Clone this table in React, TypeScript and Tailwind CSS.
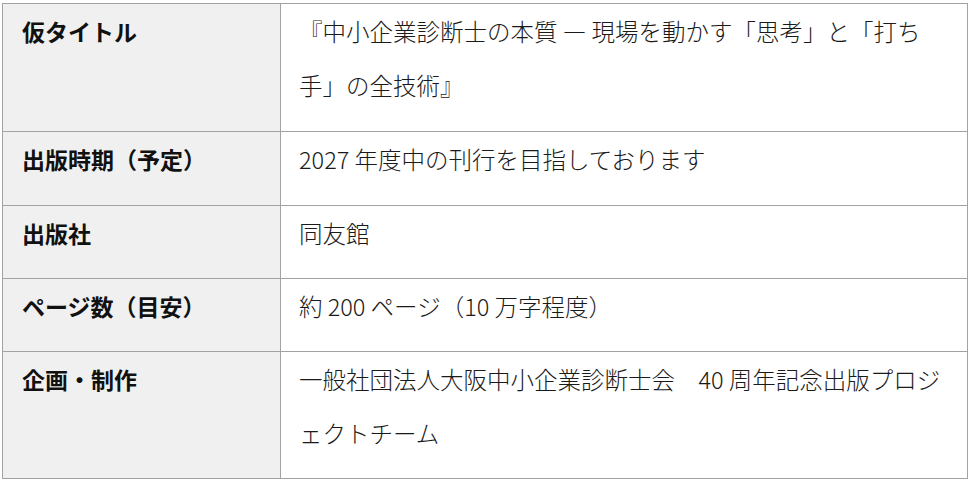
import React from "react";

const rows: { label: string; lines: string[]; pad: string }[] = [
  {
    label: "仮タイトル",
    lines: [
      "『中小企業診断士の本質 ― 現場を動かす「思考」と「打ち",
      "手」の全技術』",
    ],
    pad: "pb-[19px]",
  },
  { label: "出版時期（予定）", lines: ["2027 年度中の刊行を目指しております"], pad: "pb-[19px]" },
  { label: "出版社", lines: ["同友館"], pad: "pb-[18px]" },
  { label: "ページ数（目安）", lines: ["約 200 ページ（10 万字程度）"], pad: "pb-[18px]" },
  {
    label: "企画・制作",
    lines: [
      "一般社団法人大阪中小企業診断士会　40 周年記念出版プロジ",
      "ェクトチーム",
    ],
    pad: "pb-[18px]",
  },
];

const App = () => {
  return (
    <div
      className="min-h-[481px] w-[969px] bg-white pl-[2px] pt-[3px]"
      style={{ fontFamily: '"Noto Sans CJK JP", "Noto Sans", sans-serif' }}
    >
      <table className="w-[966px] border-collapse">
        <tbody>
          {rows.map((row) => (
            <tr key={row.label}>
              <td
                className={`w-[278px] border border-[#a3a3a3] bg-[#f0f0f0] pl-[19px] align-top text-[23px] leading-[54px] font-bold text-[#111] ${row.pad}`}
              >
                {row.label}
              </td>
              <td
                className={`border border-[#a3a3a3] pl-[18px] align-top text-[23.5px] leading-[54px] font-light text-[#1a1a1a] whitespace-nowrap ${row.pad}`}
              >
                {row.lines.map((line, i) => (
                  <div key={i}>{line}</div>
                ))}
              </td>
            </tr>
          ))}
        </tbody>
      </table>
    </div>
  );
};

export default App;
